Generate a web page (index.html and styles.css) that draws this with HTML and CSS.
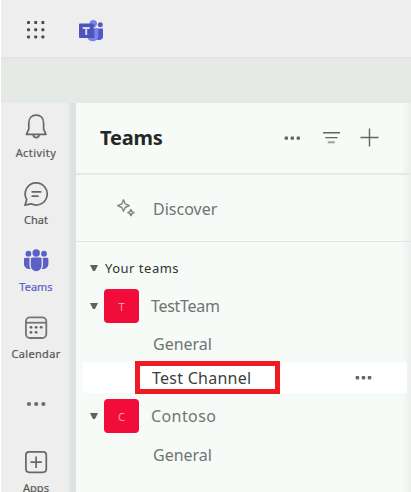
FILE: index.html
```html
<!DOCTYPE html>
<html lang="en">
<head>
<meta charset="utf-8">
<title>Teams</title>
<link rel="stylesheet" href="styles.css">
</head>
<body>
<div class="app">
  <header class="topbar">
    <svg class="waffle" width="20" height="20" viewBox="0 0 20 20" fill="#4c4c4c">
      <rect x="1" y="1" width="3" height="3" rx=".8"/><rect x="8.2" y="1" width="3" height="3" rx=".8"/><rect x="15.4" y="1" width="3" height="3" rx=".8"/>
      <rect x="1" y="8.2" width="3" height="3" rx=".8"/><rect x="8.2" y="8.2" width="3" height="3" rx=".8"/><rect x="15.4" y="8.2" width="3" height="3" rx=".8"/>
      <rect x="1" y="15.4" width="3" height="3" rx=".8"/><rect x="8.2" y="15.4" width="3" height="3" rx=".8"/><rect x="15.4" y="15.4" width="3" height="3" rx=".8"/>
    </svg>
    <svg class="logo" width="26" height="24" viewBox="0 0 26 24">
      <circle cx="15.3" cy="4.6" r="3.7" fill="#7b83eb"/>
      <circle cx="22.3" cy="5.8" r="2.5" fill="#5059c9"/>
      <path d="M17 9.5h8v7a4 4 0 0 1-8 1z" fill="#5059c9"/>
      <path d="M9 9.5h11.3v7.2a5.6 5.6 0 0 1-11.3 0z" fill="#7b83eb"/>
      <path d="M9 5h7.5v14H9z" fill="#3a42a8" opacity=".6"/>
      <rect x="1" y="4.5" width="14" height="14.5" rx="1" fill="#4b53bc"/>
      <path d="M4.7 8h7v1.9H9.2V16H7.2V9.9H4.7z" fill="#d5d7f2"/>
    </svg>
  </header>
  <div class="strip"></div>
  <div class="main">
    <nav class="rail">
      <div class="item">
        <svg width="26" height="26" viewBox="0 0 26 26" fill="none" stroke="#666866" stroke-width="1.7" stroke-linejoin="round"><path d="M13.2 1.2c-4.6 0-7.4 3.3-7.4 7.8v6.1L3.4 20.3h19.6l-2.4-5.2V9c0-4.5-2.8-7.8-7.4-7.8z"/><path d="M10.2 20.6c.3 2 1.5 3 3 3s2.7-1 3-3"/></svg>
        <span class="w-activity">Activity</span>
      </div>
      <div class="item">
        <svg width="26" height="26" viewBox="0 0 26 26" fill="none" stroke="#666866" stroke-width="1.7" stroke-linejoin="round"><path d="M13.4 1.8a11.1 11.1 0 1 1-5.3 21L2 24.2l1.7-5.7A11.1 11.1 0 0 1 13.4 1.8z"/><path d="M9.2 10.8h8.6M9.2 15.2h5.8" stroke-linecap="round"/></svg>
        <span class="w-chat">Chat</span>
      </div>
      <div class="item active">
        <svg width="26" height="26" viewBox="0 0 26 26" fill="#5b5fc7"><circle cx="13.2" cy="5" r="3.7"/><circle cx="5.4" cy="5.7" r="2.9"/><circle cx="21" cy="5.7" r="2.9"/><path d="M9.2 9.5h8a1.4 1.4 0 0 1 1.4 1.4v6.9a5.4 5.4 0 0 1-10.8 0v-6.9a1.4 1.4 0 0 1 1.4-1.4z"/><path d="M2.4 9.7h4.4q-.3.6-.3 1.3v6.4q0 2 1.2 3.6C3.4 21.2 1 19 1 16v-4.9q0-1.4 1.4-1.4zM24 9.7h-4.4q.3.6.3 1.3v6.4q0 2-1.2 3.6c4.3.2 6.7-2 6.7-5v-4.9q0-1.4-1.4-1.4z"/></svg>
        <span class="w-teams">Teams</span>
      </div>
      <div class="item">
        <svg width="26" height="26" viewBox="0 0 26 26" fill="none" stroke="#747674" stroke-width="1.8"><rect x="2.9" y="2.4" width="20.4" height="20.6" rx="4"/><path d="M3 7.7h20"/><g fill="#666" stroke="none"><circle cx="8" cy="12.3" r="1.4"/><circle cx="13.1" cy="12.3" r="1.4"/><circle cx="18.2" cy="12.3" r="1.4"/><circle cx="8" cy="17.3" r="1.4"/><circle cx="13.1" cy="17.3" r="1.4"/></g></svg>
        <span class="w-calendar">Calendar</span>
      </div>
      <div class="item">
        <svg class="more" width="26" height="26" viewBox="0 0 26 26" fill="#6b6b6b"><circle cx="6" cy="13" r="2.1"/><circle cx="13.2" cy="13" r="2.1"/><circle cx="20.4" cy="13" r="2.1"/></svg>
      </div>
      <div class="item">
        <svg width="26" height="26" viewBox="0 0 26 26" fill="none" stroke="#666866" stroke-width="1.7"><rect x="2.9" y="2.9" width="20.4" height="20.4" rx="3.2"/><path d="M13.1 7.5v11.4M7.4 13.2h11.4"/></svg>
        <span class="w-apps">Apps</span>
      </div>
    </nav>
    <section class="panel">
      <div class="head">
        <h1>Teams</h1>
        <svg width="96" height="22" viewBox="0 0 96 22" fill="none" stroke="#626462" stroke-width="1.4">
          <g fill="#626462" stroke="none"><rect x=".6" y="10.6" width="3.4" height="3.2" rx=".8"/><rect x="6.6" y="10.6" width="3.4" height="3.2" rx=".8"/><rect x="12.6" y="10.6" width="3.4" height="3.2" rx=".8"/></g>
          <path d="M39 6.7h17M41.3 11.6h12.2"/><path d="M43.8 16.3h7" stroke="#a19f9f" stroke-width="2"/>
          <path d="M85.5 2.5v18M76.5 11.5h18"/>
        </svg>
      </div>
      <div class="discover">
        <svg width="20" height="20" viewBox="0 0 20 20" fill="none" stroke="#828482" stroke-width="1.4" stroke-linejoin="round"><path d="M7.5 1.8L9.2 5.9L13.3 7.6L9.2 9.5L7.5 13.2L5.8 9.5L1.6 7.6L5.8 5.9z"/><path d="M14.9 11.6l1 2l2 1l-2 1l-1 2l-1-2l-2-1l2-1z" stroke-width="1.6"/></svg>
        <span class="w-discover">Discover</span>
      </div>
      <div class="tree">
        <div class="row section"><i class="caret"></i><span class="w-your">Your teams</span></div>
        <div class="row team"><i class="caret"></i><b class="tile">T</b><span class="w-testteam">TestTeam</span></div>
        <div class="row channel"><span class="w-general">General</span></div>
        <div class="row selected">
          <div class="outline"><span class="w-testchannel">Test Channel</span></div>
          <svg width="18" height="6" viewBox="0 0 18 6" fill="#686868"><rect x=".6" y="1" width="3.6" height="3.4" rx=".8"/><rect x="6.7" y="1" width="3.6" height="3.4" rx=".8"/><rect x="12.7" y="1" width="3.6" height="3.4" rx=".8"/></svg>
        </div>
        <div class="row team second"><i class="caret"></i><b class="tile">C</b><span class="w-contoso">Contoso</span></div>
        <div class="row channel last"><span class="w-general">General</span></div>
      </div>
    </section>
  </div>
</div>
</body>
</html>
```
FILE: styles.css
```css
* { box-sizing: border-box; }
body { margin: 0; background: #fff; font-family: "Noto Sans", "Open Sans", sans-serif; overflow: hidden; }
svg { display: block; flex: none; }
span { white-space: nowrap; }
.app { width: 411px; height: 492px; padding-left: 1px; display: flex; flex-direction: column; overflow: hidden; }
.topbar { height: 59px; flex: none; display: flex; align-items: center; gap: 32px; padding: 1px 0 0 25px; background: #eee; border-bottom: 2px solid #e2e4e2; }
.topbar .waffle { margin-top: 2px; }
.topbar .logo { margin-top: 3px; }
.strip { height: 44px; flex: none; background: #e5eae6; }
.main { flex: 1; min-height: 0; display: flex; }
.rail { width: 75px; flex: none; padding: 1px 5px 0 0; background: linear-gradient(90deg, #eee 67px, #dde1de 71px, #dfe3e0 75px); }
.item { height: 67.1px; padding-top: 10px; display: flex; flex-direction: column; align-items: center; color: #565856; font-size: 11px; line-height: 16px; -webkit-text-stroke: .2px; }
.item span { margin-top: 5px; }
.item.active { color: #5b5fc7; }
.w-activity { letter-spacing: .45px; }
.w-calendar { letter-spacing: .35px; }
.more { margin-top: 9px; }
.panel { flex: 1; background: linear-gradient(90deg, #f6fbf8 326px, #eceeec 335px); }
.head { height: 72px; padding: 0 31px 0 24px; display: flex; align-items: center; justify-content: space-between; border-bottom: 2px solid #e6eae7; }
h1 { margin: 0; font-size: 20px; line-height: 28px; font-weight: 700; color: #242825; letter-spacing: -.2px; }
.head svg { margin-bottom: 2px; }
.discover { height: 67px; padding-left: 40px; display: flex; align-items: center; gap: 17px; border-bottom: 1px solid #e2e5e3; color: #717371; font-size: 16px; }
.discover span { margin-top: 1px; }
.tree { padding-top: 8px; color: #717371; font-size: 16px; }
.row { display: flex; align-items: center; }
.section { height: 36px; padding-left: 14px; color: #303330; font-size: 13px; }
.caret { width: 8px; height: 6px; flex: none; background: #606260; clip-path: polygon(0 0, 100% 0, 62% 100%, 38% 100%); }
.section .caret { margin-right: 7px; }
.w-your { letter-spacing: .5px; }
.team { height: 40px; padding-left: 14px; }
.tile { width: 35px; height: 34px; margin: 0 12px 0 6px; border-radius: 4px; background: #f20c3a; color: #fa9bb0; font-size: 11px; font-weight: 400; display: flex; align-items: center; justify-content: center; }
.w-testteam { letter-spacing: -.3px; }
.w-contoso { letter-spacing: .4px; }
.w-testchannel { letter-spacing: .25px; }
.channel { height: 36px; padding-left: 77px; }
.selected { height: 31px; margin: 0 4px 0 7px; padding-right: 34px; justify-content: space-between; background: #fff; border-radius: 2px; color: #3d3f3d; }
.outline { width: 145px; height: 33px; margin: 0 0 0 52px; padding-left: 12px; border: 5px solid #ed1c24; display: flex; align-items: center; }
.second { height: 46px; }
.last { height: 32px; }
```
